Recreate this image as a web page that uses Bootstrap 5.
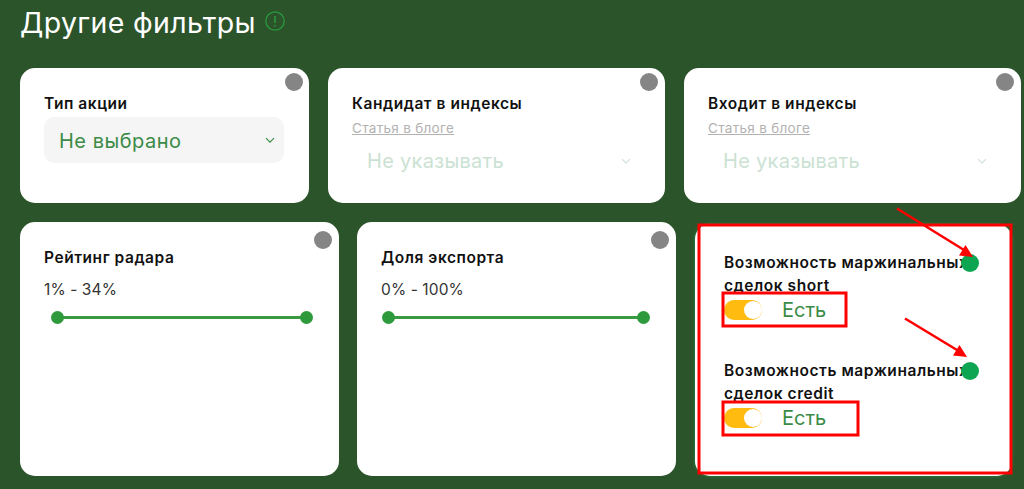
<!DOCTYPE html>
<html lang="ru">
<head>
<meta charset="utf-8">
<title>Другие фильтры</title>
<link href="https://cdn.jsdelivr.net/npm/bootstrap@5.3.0/dist/css/bootstrap.min.css" rel="stylesheet">
<style>
html,body{height:489px;overflow:hidden}
body{background:#2c542b;font-family:Inter,"Noto Sans",sans-serif;color:#111;position:relative}
.page-wrap{padding:4px 3px 0 20px}
.page-title{font-size:28.5px;line-height:38px;font-weight:400;color:#fff;margin:0;height:64px;letter-spacing:.35px}
.hint{width:20px;height:20px;vertical-align:2px;margin-left:9px}
.row-one{display:flex;gap:19px;height:135px;margin-bottom:19px}
.row-two{display:flex;height:254px}
.tile{background:#fff;border-radius:15px;position:relative;padding:26px 24px 0;flex:none}
.w-a{width:289px;padding-right:25px}.w-b{width:337px}
.w-c{width:319px}.w-d{width:319px;margin-left:18px}.w-e{width:317px;margin-left:19px;margin-top:2px;box-shadow:0 0 3px #1f9a4d}
.dot{position:absolute;width:18px;height:18px;border-radius:50%;background:#858585;top:5px;right:6px}
.w-b .dot{right:7px}
.w-c .dot,.w-d .dot{top:9px;right:7px}
.tile-label{font-size:15.5px;font-weight:600;line-height:19px;color:#111;letter-spacing:.55px}
.blog-link{display:block;font-size:13.5px;line-height:16px;color:#b2b2b2;margin-top:7px;text-decoration:underline;letter-spacing:.3px}
.pick{height:46px;border-radius:10px;display:flex;align-items:center;justify-content:space-between;padding:0 9px 0 15px;font-size:20px;letter-spacing:.5px;color:#3b8b47}
.pick-on{background:#f5f5f5}
.pick-on span{padding-top:2px}
.pick-off{color:#cbe2d3;margin-top:0;padding-right:10px;padding-left:15px;height:50px;background:#fff;letter-spacing:.3px}
.pick svg{width:10px;height:7px}
.val{font-size:15.5px;color:#333;margin-top:13px;line-height:20px;letter-spacing:.1px}
.slide{position:relative;height:3px;background:#3a9a41;margin-top:16px}
.slide-a{margin-left:13px;margin-right:8px}
.slide-b{margin-left:7px;margin-right:8px}
.knob{position:absolute;top:-5px;width:13px;height:13px;border-radius:50%;background:#2f9a3c}
.knob-l{left:-6px}.knob-r{right:-6px}
.w-e{padding:25px 29px 0}
.field{position:relative;height:108px}
.field-label{font-size:15.5px;font-weight:600;line-height:23px;padding-top:2px;letter-spacing:.55px}
.sw-row{display:flex;align-items:center;gap:20px;color:#3b8b47;font-size:20px;line-height:24px;margin-top:1px}
.sw{width:38px;height:20px;border-radius:10px;background:#ffbb0f;position:relative}
.sw::after{content:"";position:absolute;right:0;top:1px;width:18px;height:18px;border-radius:50%;background:#fff}
.field .dot{top:5px;right:4px;background:#0ea552}
.notes{position:absolute;left:0;top:0;width:1024px;height:489px;pointer-events:none}
</style>
</head>
<body>
<div class="page-wrap">
  <h1 class="page-title">Другие фильтры<svg class="hint" viewBox="0 0 20 20" fill="none" stroke="#2a9a3f" stroke-width="1.2"><circle cx="10" cy="10" r="9.2"/><path d="M10 5v7M10 14v1.4" stroke-width="1.5"/></svg></h1>
  <div class="row-one">
    <div class="tile w-a"><span class="dot"></span>
      <div class="tile-label">Тип акции</div>
      <div class="pick pick-on mt-1"><span>Не выбрано</span><svg viewBox="0 0 10 7" fill="none" stroke="#3b8b47" stroke-width="1.2"><path d="M1 1.2l4 4 4-4"/></svg></div>
    </div>
    <div class="tile w-b"><span class="dot"></span>
      <div class="tile-label">Кандидат в индексы</div>
      <a class="blog-link" href="#">Статья в блоге</a>
      <div class="pick pick-off"><span>Не указывать</span><svg viewBox="0 0 10 7" fill="none" stroke="#cfe3d6" stroke-width="1.2"><path d="M1 1.2l4 4 4-4"/></svg></div>
    </div>
    <div class="tile w-b"><span class="dot"></span>
      <div class="tile-label">Входит в индексы</div>
      <a class="blog-link" href="#">Статья в блоге</a>
      <div class="pick pick-off"><span>Не указывать</span><svg viewBox="0 0 10 7" fill="none" stroke="#cfe3d6" stroke-width="1.2"><path d="M1 1.2l4 4 4-4"/></svg></div>
    </div>
  </div>
  <div class="row-two">
    <div class="tile w-c"><span class="dot"></span>
      <div class="tile-label">Рейтинг радара</div>
      <div class="val">1% - 34%</div>
      <div class="slide slide-a"><span class="knob knob-l"></span><span class="knob knob-r"></span></div>
    </div>
    <div class="tile w-d"><span class="dot"></span>
      <div class="tile-label">Доля экспорта</div>
      <div class="val">0% - 100%</div>
      <div class="slide slide-b"><span class="knob knob-l"></span><span class="knob knob-r"></span></div>
    </div>
    <div class="tile w-e">
      <div class="field"><span class="dot"></span>
        <div class="field-label">Возможность маржинальных сделок short</div>
        <div class="sw-row"><span class="sw"></span><span>Есть</span></div>
      </div>
      <div class="field"><span class="dot"></span>
        <div class="field-label">Возможность маржинальных сделок credit</div>
        <div class="sw-row"><span class="sw"></span><span>Есть</span></div>
      </div>
    </div>
  </div>
</div>
<svg class="notes" viewBox="0 0 1024 489" fill="none">
  <rect x="699" y="225" width="312" height="248" stroke="#f00" stroke-width="3"/>
  <rect x="723" y="293" width="123" height="33" stroke="#f00" stroke-width="3"/>
  <rect x="723" y="402" width="135" height="33" stroke="#f00" stroke-width="3"/>
  <path d="M897 208.500L964 250" stroke="#f00" stroke-width="2.6"/>
  <path d="M973 257L959 255.500L965.500 245Z" fill="#f00"/>
  <path d="M905 318.500L957 350" stroke="#f00" stroke-width="2.6"/>
  <path d="M967 357L953 355.500L959.500 345Z" fill="#f00"/>
</svg>
</body>
</html>
